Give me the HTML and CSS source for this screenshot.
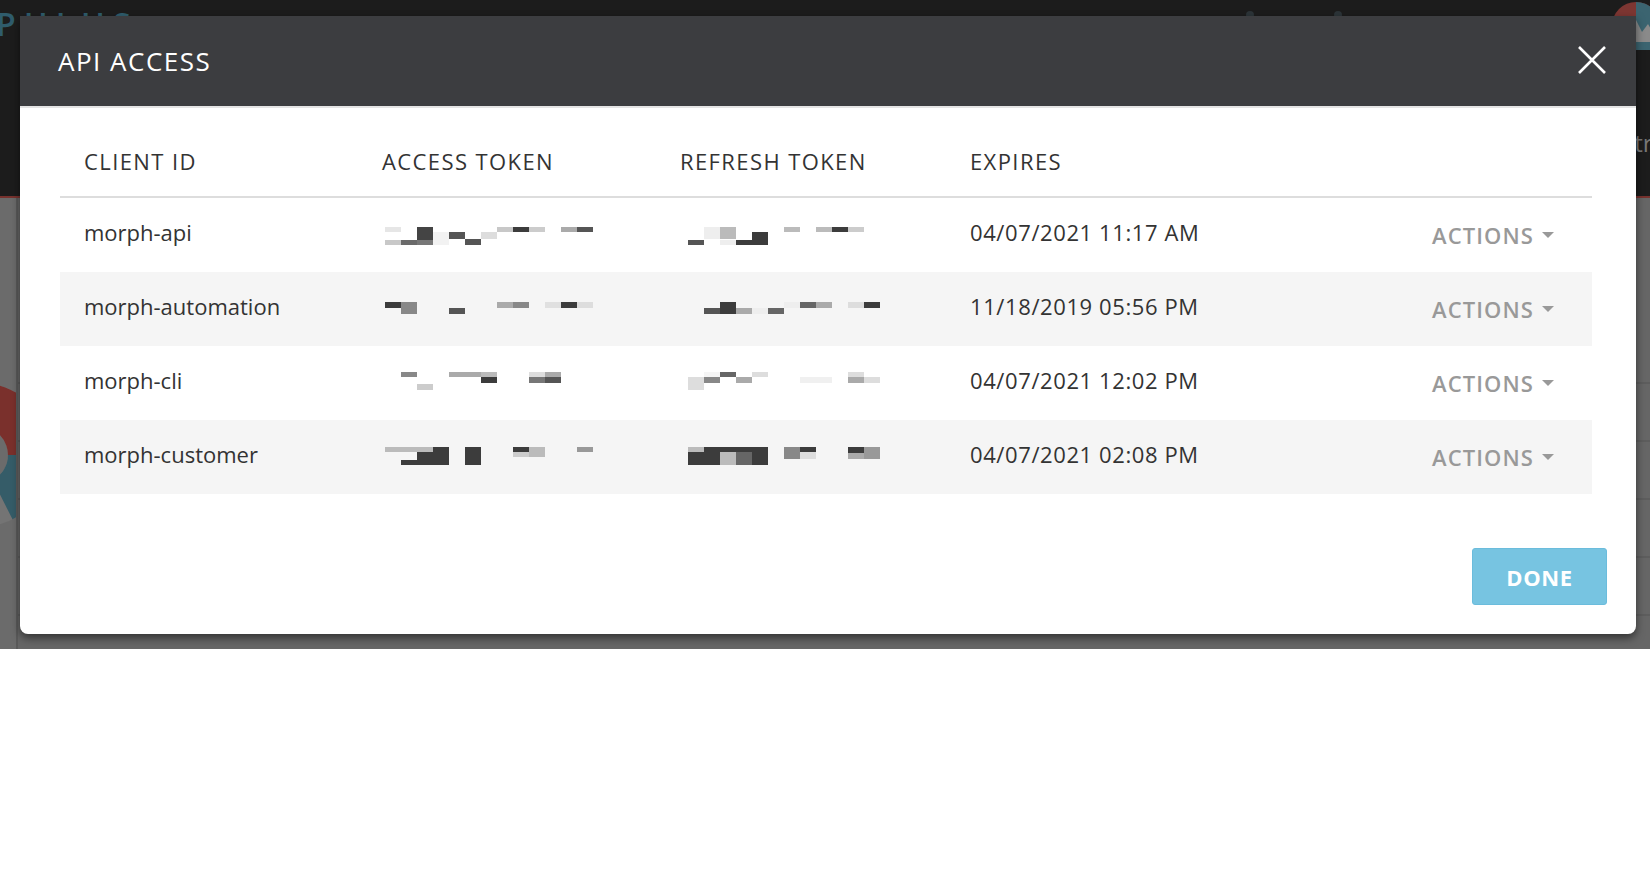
FILE: index.html
```html
<!DOCTYPE html>
<html lang="en">
<head>
    <meta charset="UTF-8">
    <title>API Access</title>
    <link rel="stylesheet" href="styles.css">
</head>
<body>
    <div class="app">
        <header class="topbar">
            <div class="topbar-main">
                <div class="logo">PHLUS</div>
                <div class="topbar-icons">
                    <span class="dot"></span>
                    <span class="dot"></span>
                </div>
                <svg class="avatar" width="48" height="48" viewBox="0 0 48 48">
                    <circle cx="24" cy="24" r="24" fill="#7d3632"/>
                    <path d="M24 0 A24 24 0 0 1 48 24 L48 48 L24 48 Z" fill="#3b6470"/>
                    <path d="M10 40 L22 14 L30 30 L36 22 L46 40 Z" fill="#8a8a8a"/>
                </svg>
            </div>
            <div class="topbar-tabs">
                <span class="tab">Central</span>
            </div>
        </header>
        <main class="page">
            <aside class="page-side">
                <svg class="donut" width="160" height="160" viewBox="0 0 160 160">
                    <circle cx="80" cy="80" r="50" fill="none" stroke="#747474" stroke-width="44"/>
                    <circle cx="80" cy="80" r="50" fill="none" stroke="#7a302c" stroke-width="44" stroke-dasharray="175 400" transform="rotate(-200 80 80)"/>
                    <circle cx="80" cy="80" r="50" fill="none" stroke="#355c68" stroke-width="44" stroke-dasharray="55 400"/>
                </svg>
            </aside>
            <section class="page-rows">
                <div class="page-row"></div>
                <div class="page-row"></div>
                <div class="page-row"></div>
                <div class="page-row"></div>
                <div class="page-row"></div>
            </section>
        </main>
    </div>

    <div class="modal">
        <div class="modal-header">
            <h1>API ACCESS</h1>
            <button class="close" aria-label="Close">
                <svg width="28" height="28" viewBox="0 0 28 28">
                    <path d="M1 1 L27 27 M27 1 L1 27" stroke="#fff" stroke-width="2.6" fill="none"/>
                </svg>
            </button>
        </div>

        <div class="modal-body">
            <table class="tokens">
                <colgroup>
                    <col class="c-client">
                    <col class="c-access">
                    <col class="c-refresh">
                    <col class="c-expires">
                    <col class="c-actions">
                </colgroup>
                <thead>
                    <tr>
                        <th>CLIENT ID</th>
                        <th>ACCESS TOKEN</th>
                        <th>REFRESH TOKEN</th>
                        <th>EXPIRES</th>
                        <th></th>
                    </tr>
                </thead>
                <tbody>
                    <tr>
                        <td>morph-api</td>
                        <td>
                            <svg class="redacted" width="240" height="30" viewBox="0 0 240 30">
                                <g transform="translate(3 0)">
                                    <rect x="0" y="10" width="16" height="5" fill="#e6e6e6"/>
                                    <rect x="0" y="23" width="16" height="5" fill="#c8c8c8"/>
                                    <rect x="16" y="23" width="16" height="5" fill="#6a6a6a"/>
                                    <rect x="32" y="10" width="16" height="13" fill="#444"/>
                                    <rect x="32" y="23" width="16" height="5" fill="#777"/>
                                    <rect x="48" y="15" width="16" height="13" fill="#f2f2f2"/>
                                    <rect x="64" y="15" width="16" height="7" fill="#555"/>
                                    <rect x="80" y="22" width="16" height="6" fill="#555"/>
                                    <rect x="96" y="15" width="16" height="7" fill="#ddd"/>
                                    <rect x="112" y="10" width="16" height="5" fill="#c8c8c8"/>
                                    <rect x="128" y="10" width="16" height="5" fill="#3c3c3c"/>
                                    <rect x="144" y="10" width="16" height="5" fill="#ccc"/>
                                    <rect x="176" y="10" width="16" height="5" fill="#aaa"/>
                                    <rect x="192" y="10" width="16" height="5" fill="#555"/>
                                </g>
                            </svg>
                        </td>
                        <td>
                            <svg class="redacted" width="240" height="30" viewBox="0 0 240 30">
                                <g transform="translate(8 0)">
                                    <rect x="0" y="23" width="16" height="5" fill="#555"/>
                                    <rect x="16" y="10" width="16" height="12" fill="#eee"/>
                                    <rect x="32" y="10" width="16" height="12" fill="#bbb"/>
                                    <rect x="32" y="23" width="16" height="5" fill="#eee"/>
                                    <rect x="48" y="23" width="16" height="5" fill="#3c3c3c"/>
                                    <rect x="64" y="15" width="16" height="13" fill="#3c3c3c"/>
                                    <rect x="96" y="10" width="16" height="5" fill="#bbb"/>
                                    <rect x="128" y="10" width="16" height="5" fill="#bbb"/>
                                    <rect x="144" y="10" width="16" height="5" fill="#3c3c3c"/>
                                    <rect x="160" y="10" width="16" height="5" fill="#ccc"/>
                                </g>
                            </svg>
                        </td>
                        <td class="expires">04/07/2021 11:17 AM</td>
                        <td class="actions"><span class="actions-toggle">ACTIONS<i class="caret"></i></span></td>
                    </tr>
                    <tr>
                        <td>morph-automation</td>
                        <td>
                            <svg class="redacted" width="240" height="30" viewBox="0 0 240 30">
                                <g transform="translate(3 0)">
                                    <rect x="0" y="11" width="16" height="6" fill="#3c3c3c"/>
                                    <rect x="16" y="11" width="16" height="12" fill="#888"/>
                                    <rect x="64" y="17" width="16" height="6" fill="#555"/>
                                    <rect x="112" y="11" width="16" height="6" fill="#aaa"/>
                                    <rect x="128" y="11" width="16" height="6" fill="#888"/>
                                    <rect x="160" y="11" width="16" height="6" fill="#e0e0e0"/>
                                    <rect x="176" y="11" width="16" height="6" fill="#3c3c3c"/>
                                    <rect x="192" y="11" width="16" height="6" fill="#ddd"/>
                                </g>
                            </svg>
                        </td>
                        <td>
                            <svg class="redacted" width="240" height="30" viewBox="0 0 240 30">
                                <g transform="translate(8 0)">
                                    <rect x="16" y="17" width="16" height="6" fill="#555"/>
                                    <rect x="32" y="11" width="16" height="12" fill="#3c3c3c"/>
                                    <rect x="48" y="17" width="16" height="6" fill="#aaa"/>
                                    <rect x="64" y="17" width="16" height="6" fill="#eee"/>
                                    <rect x="80" y="17" width="16" height="6" fill="#666"/>
                                    <rect x="96" y="11" width="16" height="6" fill="#eee"/>
                                    <rect x="112" y="11" width="16" height="6" fill="#666"/>
                                    <rect x="128" y="11" width="16" height="6" fill="#aaa"/>
                                    <rect x="160" y="11" width="16" height="6" fill="#ddd"/>
                                    <rect x="176" y="11" width="16" height="6" fill="#3c3c3c"/>
                                </g>
                            </svg>
                        </td>
                        <td class="expires">11/18/2019 05:56 PM</td>
                        <td class="actions"><span class="actions-toggle">ACTIONS<i class="caret"></i></span></td>
                    </tr>
                    <tr>
                        <td>morph-cli</td>
                        <td>
                            <svg class="redacted" width="240" height="30" viewBox="0 0 240 30">
                                <g transform="translate(3 0)">
                                    <rect x="16" y="7" width="16" height="5" fill="#888"/>
                                    <rect x="32" y="19" width="16" height="6" fill="#ccc"/>
                                    <rect x="64" y="7" width="32" height="5" fill="#aaa"/>
                                    <rect x="96" y="7" width="16" height="5" fill="#bbb"/>
                                    <rect x="96" y="12" width="16" height="6" fill="#3c3c3c"/>
                                    <rect x="144" y="7" width="16" height="5" fill="#ddd"/>
                                    <rect x="144" y="12" width="16" height="6" fill="#777"/>
                                    <rect x="160" y="7" width="16" height="5" fill="#aaa"/>
                                    <rect x="160" y="12" width="16" height="6" fill="#555"/>
                                </g>
                            </svg>
                        </td>
                        <td>
                            <svg class="redacted" width="240" height="30" viewBox="0 0 240 30">
                                <g transform="translate(8 0)">
                                    <rect x="0" y="12" width="16" height="13" fill="#ddd"/>
                                    <rect x="16" y="7" width="16" height="5" fill="#f5f5f5"/>
                                    <rect x="16" y="12" width="16" height="6" fill="#888"/>
                                    <rect x="32" y="7" width="16" height="5" fill="#666"/>
                                    <rect x="48" y="12" width="16" height="6" fill="#aaa"/>
                                    <rect x="64" y="7" width="16" height="5" fill="#ddd"/>
                                    <rect x="112" y="12" width="32" height="6" fill="#f0f0f0"/>
                                    <rect x="160" y="7" width="16" height="5" fill="#ddd"/>
                                    <rect x="160" y="12" width="16" height="6" fill="#aaa"/>
                                    <rect x="176" y="12" width="16" height="6" fill="#ddd"/>
                                </g>
                            </svg>
                        </td>
                        <td class="expires">04/07/2021 12:02 PM</td>
                        <td class="actions"><span class="actions-toggle">ACTIONS<i class="caret"></i></span></td>
                    </tr>
                    <tr>
                        <td>morph-customer</td>
                        <td>
                            <svg class="redacted" width="240" height="30" viewBox="0 0 240 30">
                                <g transform="translate(3 0)">
                                    <rect x="0" y="8" width="48" height="5" fill="#bbb"/>
                                    <rect x="16" y="21" width="32" height="5" fill="#3c3c3c"/>
                                    <rect x="32" y="13" width="16" height="8" fill="#3c3c3c"/>
                                    <rect x="48" y="8" width="16" height="18" fill="#3c3c3c"/>
                                    <rect x="80" y="8" width="16" height="18" fill="#3c3c3c"/>
                                    <rect x="128" y="8" width="16" height="5" fill="#3c3c3c"/>
                                    <rect x="128" y="13" width="16" height="5" fill="#ccc"/>
                                    <rect x="144" y="8" width="16" height="10" fill="#bbb"/>
                                    <rect x="192" y="8" width="16" height="5" fill="#999"/>
                                </g>
                            </svg>
                        </td>
                        <td>
                            <svg class="redacted" width="240" height="30" viewBox="0 0 240 30">
                                <g transform="translate(8 0)">
                                    <rect x="0" y="8" width="16" height="5" fill="#bbb"/>
                                    <rect x="0" y="13" width="16" height="13" fill="#3c3c3c"/>
                                    <rect x="16" y="8" width="16" height="18" fill="#3c3c3c"/>
                                    <rect x="32" y="8" width="16" height="5" fill="#3c3c3c"/>
                                    <rect x="32" y="13" width="16" height="13" fill="#bbb"/>
                                    <rect x="48" y="8" width="16" height="5" fill="#3c3c3c"/>
                                    <rect x="48" y="13" width="16" height="13" fill="#666"/>
                                    <rect x="64" y="8" width="16" height="18" fill="#3c3c3c"/>
                                    <rect x="96" y="8" width="16" height="12" fill="#888"/>
                                    <rect x="112" y="8" width="16" height="5" fill="#3c3c3c"/>
                                    <rect x="112" y="13" width="16" height="7" fill="#ddd"/>
                                    <rect x="160" y="8" width="16" height="6" fill="#3c3c3c"/>
                                    <rect x="160" y="14" width="16" height="6" fill="#aaa"/>
                                    <rect x="176" y="8" width="16" height="12" fill="#999"/>
                                </g>
                            </svg>
                        </td>
                        <td class="expires">04/07/2021 02:08 PM</td>
                        <td class="actions"><span class="actions-toggle">ACTIONS<i class="caret"></i></span></td>
                    </tr>
                </tbody>
            </table>
        </div>

        <div class="modal-footer">
            <button class="btn-done">DONE</button>
        </div>
    </div>
</body>
</html>
```

FILE: styles.css
```css
html, body {
    margin: 0;
    padding: 0;
    background: #fff;
}
body {
    font-family: "Open Sans", "Noto Sans", sans-serif;
    overflow: hidden;
    position: relative;
}

/* dimmed app behind the dialog */
.app {
    height: 649px;
    background: #666;
    overflow: hidden;
}
.topbar {
    height: 196px;
    background: #1c1c1c;
    border-bottom: 2px solid #77322e;
}
.topbar-main {
    display: flex;
    align-items: flex-start;
    height: 52px;
}
.logo {
    font-size: 32px;
    font-weight: 600;
    line-height: 32px;
    letter-spacing: 8px;
    color: #2f5c6c;
    margin-left: -4px;
    margin-top: 8px;
}
.topbar-icons {
    display: flex;
    gap: 80px;
    margin-left: auto;
    margin-right: 270px;
    margin-top: 11px;
}
.topbar-icons .dot {
    width: 8px;
    height: 8px;
    border-radius: 50%;
    background: #2c3438;
}
.avatar {
    margin-top: 2px;
    margin-right: -10px;
}
.topbar-tabs {
    display: flex;
    justify-content: flex-end;
    margin-top: 74px;
    margin-right: -22px;
}
.tab {
    font-size: 24px;
    color: #777;
}

.page {
    display: flex;
    height: 451px;
}
.page-side {
    width: 16px;
    overflow: hidden;
    background: #6b6b6b;
    border-right: 2px solid #5a5a5a;
}
.donut {
    display: block;
    margin: 177px 0 0 -100px;
}
.page-rows {
    flex: 1;
    padding-top: 128px;
}
.page-row {
    height: 56px;
    border-bottom: 2px solid #5d5d5d;
}

/* dialog */
.modal {
    position: absolute;
    top: 16px;
    left: 20px;
    width: 1616px;
    background: #fff;
    border-radius: 0 0 8px 8px;
    box-shadow: 0 4px 8px rgba(0, 0, 0, 0.5);
}
.modal-header {
    display: flex;
    align-items: center;
    height: 90px;
    padding: 0 30px 0 38px;
    background: #3c3d40;
    border-bottom: 2px solid #e4e4e4;
}
.modal-header h1 {
    margin: 0;
    font-size: 26px;
    font-weight: 400;
    letter-spacing: 1.5px;
    color: #fff;
}
.close {
    margin-left: auto;
    margin-top: -2px;
    padding: 0;
    border: none;
    background: none;
    display: flex;
}

.modal-body {
    padding: 0 44px 0 40px;
}
.tokens {
    width: 100%;
    border-collapse: separate;
    border-spacing: 0;
    color: #333;
    font-size: 22px;
}
.c-client { width: 298px; }
.c-access { width: 298px; }
.c-refresh { width: 290px; }
.tokens th {
    text-align: left;
    font-weight: 400;
    letter-spacing: 1.4px;
    line-height: 30px;
    padding: 38px 24px 20px;
    border-bottom: 2px solid #ddd;
    white-space: nowrap;
}
.tokens td {
    height: 30px;
    line-height: 30px;
    padding: 19px 24px 25px;
    white-space: nowrap;
    vertical-align: top;
}
.tokens td.expires {
    letter-spacing: 0.6px;
}
.tokens tbody tr:nth-child(even) td {
    background: #f5f5f5;
}
.redacted {
    display: block;
}
.tokens td.actions {
    text-align: right;
    padding: 22px 38px 22px 24px;
}
.actions-toggle {
    display: inline-flex;
    align-items: center;
    height: 30px;
    vertical-align: top;
    font-size: 22px;
    font-weight: 600;
    letter-spacing: 1.1px;
    color: #999;
}
.caret {
    display: inline-block;
    margin-left: 8px;
    border-left: 6px solid transparent;
    border-right: 6px solid transparent;
    border-top: 6px solid #999;
}

.modal-footer {
    display: flex;
    justify-content: flex-end;
    padding: 54px 29px 29px;
}
.btn-done {
    width: 135px;
    height: 57px;
    font-family: inherit;
    font-size: 22px;
    font-weight: 700;
    letter-spacing: 0.6px;
    color: #fff;
    background: #77c4e1;
    border: 1px solid #6bbcdc;
    border-radius: 3px;
}
```
